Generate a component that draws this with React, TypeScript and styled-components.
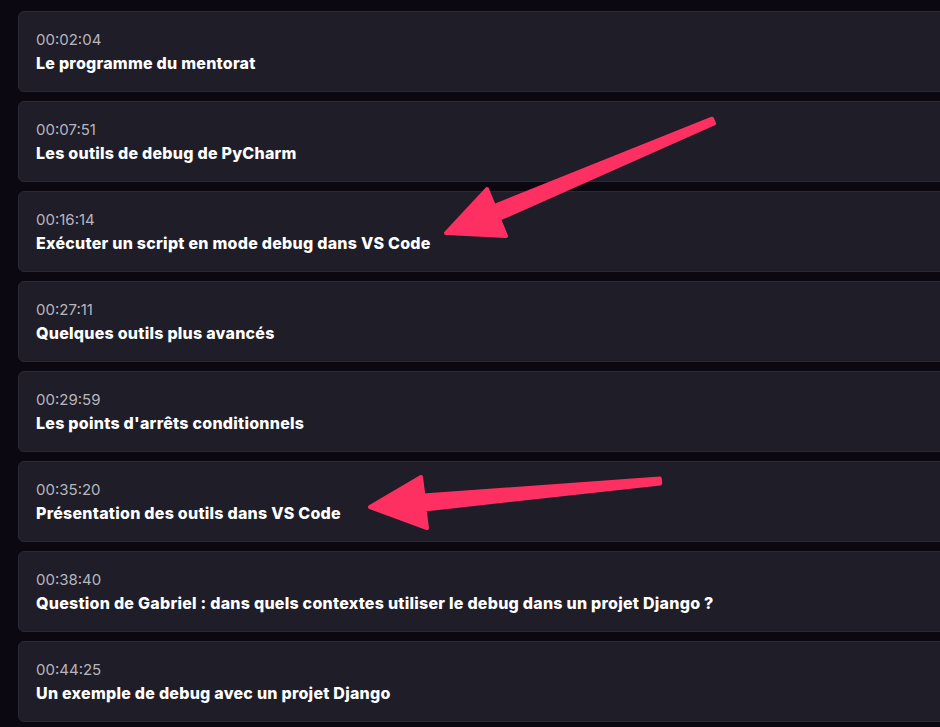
import * as React from 'react';
import styled, { createGlobalStyle } from 'styled-components';

const GlobalStyle = createGlobalStyle`
  html, body {
    margin: 0;
    padding: 0;
    background: #0c0812;
  }
  body {
    font-family: "Inter", "Noto Sans", sans-serif;
    overflow: hidden;
  }
`;

interface Chapter {
    time: string;
    title: string;
}

const chapters: Chapter[] = [
    { time: '00:02:04', title: 'Le programme du mentorat' },
    { time: '00:07:51', title: 'Les outils de debug de PyCharm' },
    { time: '00:16:14', title: 'Exécuter un script en mode debug dans VS Code' },
    { time: '00:27:11', title: 'Quelques outils plus avancés' },
    { time: '00:29:59', title: "Les points d'arrêts conditionnels" },
    { time: '00:35:20', title: 'Présentation des outils dans VS Code' },
    { time: '00:38:40', title: 'Question de Gabriel : dans quels contextes utiliser le debug dans un projet Django ?' },
    { time: '00:44:25', title: 'Un exemple de debug avec un projet Django' },
];

const Page = styled.div`
    position: relative;
    width: 940px;
    height: 727px;
    overflow: hidden;
    background: #0c0812;
`;

const List = styled.div`
    display: flex;
    flex-direction: column;
    gap: 9px;
    padding: 11px 0 0 18px;
    margin-right: -30px;
`;

const Card = styled.div`
    box-sizing: border-box;
    height: 81px;
    padding: 16px 18px 0 17px;
    background: #1e1d28;
    border: 1px solid #2a2934;
    border-radius: 6px;
`;

const Time = styled.div`
    font-size: 15px;
    line-height: 24px;
    font-weight: 400;
    color: #b7b6be;
`;

const Title = styled.div`
    font-size: 16px;
    line-height: 23px;
    font-weight: 800;
    letter-spacing: 0.25px;
    color: #ffffff;
    white-space: nowrap;
`;

const Overlay = styled.svg`
    position: absolute;
    left: 0;
    top: 0;
    pointer-events: none;
`;

const ARROW = '#fe3062';

export default function App() {
    return <Page>
        <GlobalStyle />
        <List>
            {chapters.map(c => <Card key={c.time}>
                <Time>{c.time}</Time>
                <Title>{c.title}</Title>
            </Card>)}
        </List>
        <Overlay width="940" height="727" viewBox="0 0 940 727">
            <polygon
                points="446,233 487,189 494,206 712,118.7 714,123.3 499,219 506,236"
                fill={ARROW} stroke={ARROW} strokeWidth="4" strokeLinejoin="round"
            />
            <polygon
                points="370,507 421,477 423.4,495.5 659.8,478.5 660.2,483.5 424.6,509.5 427,528"
                fill={ARROW} stroke={ARROW} strokeWidth="4" strokeLinejoin="round"
            />
        </Overlay>
    </Page>;
}
